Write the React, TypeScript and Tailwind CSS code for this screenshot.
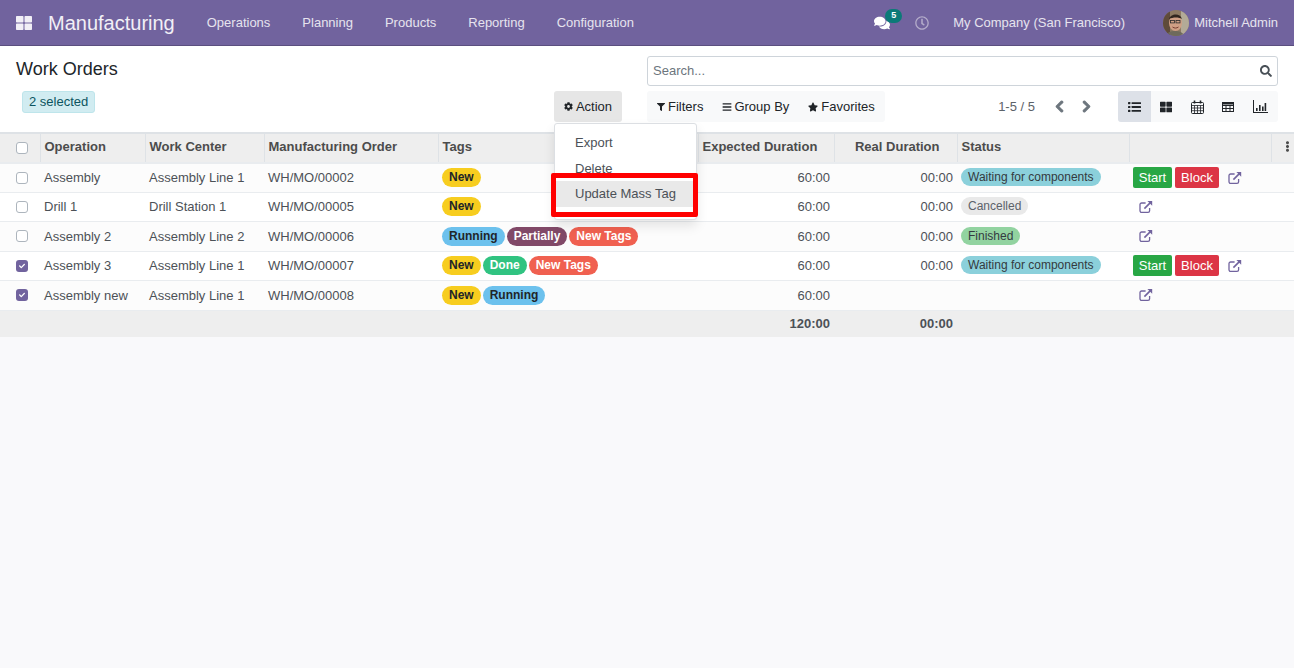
import React from "react";
import { FaThLarge, FaComments, FaRegClock, FaSearch, FaCog, FaFilter, FaBars, FaStar, FaChevronLeft, FaChevronRight, FaCheck, FaEllipsisV } from "react-icons/fa";

const tagColor: Record<string, string> = {
  New: "bg-[#f7cd1f] text-[#212529]",
  Running: "bg-[#6cc1ed] text-[#212529]",
  Partially: "bg-[#814968] text-white",
  "New Tags": "bg-[#f06050] text-white",
  Done: "bg-[#30c381] text-white",
};
const statusColor: Record<string, string> = {
  "Waiting for components": "bg-[#8bd0db] text-[#343a40]",
  Cancelled: "bg-[#e9e9e9] text-[#5c6269]",
  Finished: "bg-[#92d3a0] text-[#343a40]",
};

type Row = { op: string; wc: string; mo: string; tags: string[]; real: string; status: string; btn: boolean; checked: boolean; bg: string };
const rows: Row[] = [
  { op: "Assembly", wc: "Assembly Line 1", mo: "WH/MO/00002", tags: ["New"], real: "00:00", status: "Waiting for components", btn: true, checked: false, bg: "bg-[#fcfcfc]" },
  { op: "Drill 1", wc: "Drill Station 1", mo: "WH/MO/00005", tags: ["New"], real: "00:00", status: "Cancelled", btn: false, checked: false, bg: "bg-white" },
  { op: "Assembly 2", wc: "Assembly Line 2", mo: "WH/MO/00006", tags: ["Running", "Partially", "New Tags"], real: "00:00", status: "Finished", btn: false, checked: false, bg: "bg-[#fcfcfc]" },
  { op: "Assembly 3", wc: "Assembly Line 1", mo: "WH/MO/00007", tags: ["New", "Done", "New Tags"], real: "00:00", status: "Waiting for components", btn: true, checked: true, bg: "bg-white" },
  { op: "Assembly new", wc: "Assembly Line 1", mo: "WH/MO/00008", tags: ["New", "Running"], real: "", status: "", btn: false, checked: true, bg: "bg-[#fcfcfc]" },
];

function Check({ on }: { on: boolean }) {
  return on ? (
    <span className="ml-4 flex h-3 w-3 items-center justify-center rounded-[3px] bg-[#71639e] text-white">
      <FaCheck className="text-[6px]" />
    </span>
  ) : (
    <span className="ml-4 block h-3 w-3 rounded-[3px] border border-[#adb5bd] bg-white" />
  );
}

function OpenIcon() {
  return (
    <svg width="14" height="14" viewBox="0 0 14 14" fill="none" stroke="#71639e" strokeWidth="1.3" className="block">
      <path d="M10.6 8v2.8a1.6 1.6 0 0 1-1.6 1.6H2.6A1.6 1.6 0 0 1 1 10.8V4.6A1.6 1.6 0 0 1 2.6 3h4" />
      <path d="M5.4 8.6 12.4 1.6" strokeWidth="1.6" />
      <path d="M8.4.9h4.8v4.8z" fill="#71639e" stroke="none" />
    </svg>
  );
}

function Avatar() {
  return (
    <svg width="26" height="26" viewBox="0 0 26 26" className="block rounded-full">
      <rect width="26" height="26" fill="#8d7a63" />
      <rect x="18" width="8" height="26" fill="#b3aa97" />
      <rect x="0" y="0" width="7" height="26" fill="#5f4b3a" />
      <ellipse cx="12.5" cy="13" rx="6.5" ry="8" fill="#cf9f85" />
      <path d="M6 9c1-5 11-7 13 0-3-2-9-2-13 0z" fill="#30261f" />
      <rect x="7.5" y="10.5" width="4" height="2.4" fill="none" stroke="#2b2b2b" strokeWidth="0.8" />
      <rect x="13" y="10.5" width="4" height="2.4" fill="none" stroke="#2b2b2b" strokeWidth="0.8" />
      <path d="M9.5 17c2 1.4 4 1.4 6 0" stroke="#7a3f32" strokeWidth="1" fill="none" />
      <path d="M3 26c1-4 5-5 9-5s8 1 9 5z" fill="#6e6a5c" />
    </svg>
  );
}

function ListIcon() {
  return (
    <svg width="13" height="10" viewBox="0 0 13 10" fill="currentColor" className="block">
      <rect x="0" y="0" width="2.4" height="2.2" rx="0.6" />
      <rect x="0" y="3.9" width="2.4" height="2.2" rx="0.6" />
      <rect x="0" y="7.8" width="2.4" height="2.2" rx="0.6" />
      <rect x="3.6" y="0.2" width="9.4" height="1.8" rx="0.3" />
      <rect x="3.6" y="4.1" width="9.4" height="1.8" rx="0.3" />
      <rect x="3.6" y="8" width="9.4" height="1.8" rx="0.3" />
    </svg>
  );
}

function CalendarIcon() {
  return (
    <svg width="13" height="14" viewBox="0 0 13 14" fill="none" stroke="currentColor" strokeWidth="1" className="block">
      <rect x="0.5" y="2.5" width="12" height="11" rx="1" />
      <path d="M0.5 5.5h12M0.5 8h12M0.5 10.7h12M3.5 5.5v8M6.5 5.5v8M9.5 5.5v8" strokeWidth="0.8" />
      <path d="M3.5 0.5v3M9.5 0.5v3" strokeWidth="1.6" />
    </svg>
  );
}

function TableIcon() {
  return (
    <svg width="12" height="10" viewBox="0 0 12 10" fill="none" stroke="currentColor" strokeWidth="1" className="block">
      <rect x="0.5" y="0.5" width="11" height="9" />
      <path d="M0.5 3.5h11M0.5 6.5h11M4 3.5v6M8 3.5v6" />
      <path d="M0.5 1.5h11" strokeWidth="2" />
    </svg>
  );
}

function Tag({ t }: { t: string }) {
  return <span className={`inline-block h-[19px] rounded-full px-[7px] text-[12px] font-bold leading-[18px] ${tagColor[t]}`}>{t}</span>;
}

const navItem = "text-[13px] text-[#e6e3ee]";
const thBase = "border-l border-[#dee2e6] px-1 pb-[2px] align-middle text-[13px] font-bold text-[#4c4c4c] whitespace-nowrap";
const th = `${thBase} text-left`;
const thR = `${thBase} pr-[17px] text-right`;
const td = "px-1 align-middle text-[13px] text-[#4c5157] whitespace-nowrap";
const tdR = "pl-1 pr-[4px] align-middle text-right text-[13px] text-[#4c5157] whitespace-nowrap";

export default function App() {
  return (
    <div className="flex h-[668px] w-[1294px] flex-col overflow-hidden bg-[#f9f9fb] font-['Liberation_Sans',Arial,sans-serif] text-[13px] text-[#212529]">
      <header className="flex h-[46px] shrink-0 items-center border-b border-[#5b4f7f] bg-[#71639e]">
        <FaThLarge className="ml-4 text-[16px] text-[#f1eff6]" />
        <span className="ml-4 text-[20px] text-[#f1eff6]">Manufacturing</span>
        <nav className="ml-[32px] flex gap-[32px]">
          {["Operations", "Planning", "Products", "Reporting", "Configuration"].map((n) => (
            <span key={n} className={navItem}>{n}</span>
          ))}
        </nav>
        <div className="relative ml-auto">
          <FaComments className="text-[16px] text-white" />
          <span className="absolute -top-[6px] left-[11px] flex h-[14px] w-[17px] items-center justify-center rounded-full bg-[#0b7a78] text-[9px] font-bold text-white">5</span>
        </div>
        <FaRegClock className="ml-[25px] text-[14px] text-[#b4acca]" />
        <span className={`${navItem} ml-[24px]`}>My Company (San Francisco)</span>
        <span className="ml-[38px]"><Avatar /></span>
        <span className={`${navItem} ml-[5px] mr-4`}>Mitchell Admin</span>
      </header>

      <section className="relative flex h-[86px] shrink-0 bg-white pl-4 pr-4">
        <div className="w-[631px]">
          <h1 className="mt-[12px] text-[18px] leading-[22px] text-[#212529]">Work Orders</h1>
          <div className="relative mt-[11px] flex h-[31px] items-start">
            <span className="ml-[6px] flex h-[22px] items-center rounded-[3px] border border-[#bee5eb] bg-[#d1ecf1] px-[6px] text-[13px] text-[#0c5460]">2 selected</span>
            <button className="absolute left-[538px] top-0 flex h-[31px] w-[68px] items-center justify-center gap-[3px] rounded-[3px] bg-[#e6e6e6] text-[13px] text-[#212529]">
              <FaCog className="text-[9px]" /> Action
            </button>
          </div>
        </div>
        <div className="flex-1 pt-[10px]">
          <div className="flex h-[30px] items-center justify-between rounded-[3px] border border-[#ced4da] bg-white pl-[5px] pr-[5px]">
            <span className="text-[13px] text-[#6c757d]">Search...</span>
            <FaSearch className="text-[12px] text-[#495057]" />
          </div>
          <div className="mt-[5px] flex h-[31px] items-center">
            <div className="flex h-full items-center gap-[19px] rounded-[3px] bg-[#f8f9fa] px-[10px] text-[13px] text-[#212529]">
              <span className="flex items-center gap-[3px]"><FaFilter className="w-2 text-[8px]" />Filters</span>
              <span className="flex items-center gap-[2px]"><FaBars className="w-[10px] text-[10px]" />Group By</span>
              <span className="flex items-center gap-[3px]"><FaStar className="w-[10px] text-[10px]" />Favorites</span>
            </div>
            <span className="ml-auto text-[13px] text-[#5c6269]">1-5 / 5</span>
            <FaChevronLeft className="ml-[18px] stroke-[40px] text-[13px] text-[#6c757d]" />
            <FaChevronRight className="ml-[14px] stroke-[40px] text-[13px] text-[#6c757d]" />
            <div className="ml-[25px] flex h-full w-[160px] items-center rounded-[3px] bg-[#f8f9fa] text-[#212529]">
              <span className="flex h-full w-[33px] items-center justify-center rounded-l-[3px] bg-[#dde1e8]"><ListIcon /></span>
              <span className="flex w-[31px] justify-center pr-[2px]"><FaThLarge className="text-[12px]" /></span>
              <span className="flex w-[31px] justify-center"><CalendarIcon /></span>
              <span className="flex w-[31px] justify-center pr-[2px]"><TableIcon /></span>
              <span className="flex w-[32px] justify-center">
                <svg width="15" height="13" viewBox="0 0 15 13" fill="currentColor"><path d="M0 0h1v12h14v1H0z" /><path d="M3 8h1.6v3H3zM6 5h1.6v6H6zM9 6.5h1.6V11H9zM11.6 3h1.6v8h-1.6z" /></svg>
              </span>
            </div>
          </div>
        </div>

        <div className="absolute left-[554px] top-[77px] z-10 h-[97px] w-[143px] rounded-[3px] border border-[#dcdfe3] bg-white pt-[6px] text-[13px] text-[#4c5157] shadow-[0_6px_12px_rgba(0,0,0,0.1)]">
          <div className="flex h-[26px] items-center pl-5">Export</div>
          <div className="flex h-[26px] items-center pl-5">Delete</div>
          <div className="-mt-[1px] flex h-[26px] items-center bg-[#e9e9e9] pl-5">Update Mass Tag</div>
          <div className="absolute -left-[4px] top-[49px] h-[44px] w-[147px] rounded-[2px] border-[5px] border-[#ff0000]" />
        </div>
      </section>

      <table className="w-[1294px] table-fixed border-collapse">
        <colgroup>
          <col className="w-[40px]" /><col className="w-[105px]" /><col className="w-[119px]" /><col className="w-[174px]" />
          <col className="w-[260px]" /><col className="w-[136px]" /><col className="w-[123px]" /><col className="w-[172px]" />
          <col className="w-[142px]" /><col className="w-[23px]" />
        </colgroup>
        <thead>
          <tr className="h-[29.5px] border-y-2 border-t-[#dee2e6] border-b-[#e9ecef] bg-[#eeeeee]">
            <th className="px-0"><Check on={false} /></th>
            <th className={th}>Operation</th>
            <th className={th}>Work Center</th>
            <th className={th}>Manufacturing Order</th>
            <th className={th}>Tags</th>
            <th className={thR}>Expected Duration</th>
            <th className={thR}>Real Duration</th>
            <th className={th}>Status</th>
            <th className={th}></th>
            <th className={th}><FaEllipsisV className="ml-[6px] text-[11px] text-[#4c4c4c]" /></th>
          </tr>
        </thead>
        <tbody>
          {rows.map((r) => (
            <tr key={r.op} className={`h-[29.5px] ${r.bg} border-b border-[#e9ecef]`}>
              <td className="px-0 align-middle"><Check on={r.checked} /></td>
              <td className={td}>{r.op}</td>
              <td className={td}>{r.wc}</td>
              <td className={td}>{r.mo}</td>
              <td className={td}>
                <div className="flex gap-[2px]">{r.tags.map((t) => <Tag key={t} t={t} />)}</div>
              </td>
              <td className={tdR}>60:00</td>
              <td className={tdR}>{r.real}</td>
              <td className={td}>
                {r.status && <span className={`mb-px block h-[18px] w-fit rounded-full px-[7px] text-[12px] leading-[18px] ${statusColor[r.status]}`}>{r.status}</span>}
              </td>
              <td className={td}>
                {r.btn ? (
                  <div className="flex items-center">
                    <span className="flex h-[21px] w-[39px] items-center justify-center rounded-[2px] bg-[#28a745] text-[13px] text-white">Start</span>
                    <span className="ml-[3px] flex h-[21px] w-[44px] items-center justify-center rounded-[2px] bg-[#dc3545] text-[13px] text-white">Block</span>
                    <span className="ml-[9px]"><OpenIcon /></span>
                  </div>
                ) : (
                  <span className="ml-[6px] block"><OpenIcon /></span>
                )}
              </td>
              <td></td>
            </tr>
          ))}
          <tr className="h-[26.5px] bg-[#eeeeee]">
            <td colSpan={5}></td>
            <td className={`${tdR} font-bold`}>120:00</td>
            <td className={`${tdR} font-bold`}>00:00</td>
            <td colSpan={3}></td>
          </tr>
        </tbody>
      </table>
    </div>
  );
}
